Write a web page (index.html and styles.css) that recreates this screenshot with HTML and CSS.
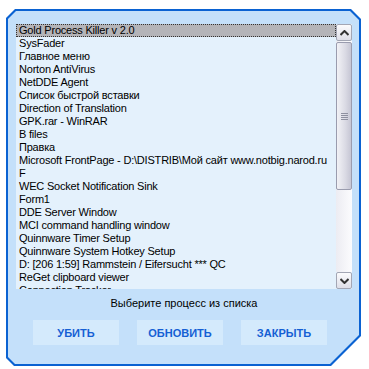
FILE: index.html
```html
<!DOCTYPE html>
<html lang="ru">
<head>
    <meta charset="UTF-8">
    <title>Gold Process Killer</title>
    <link rel="stylesheet" href="styles.css">
</head>
<body>
    <div class="window">
        <div class="panel">
            <div class="listbox">
                <div class="items">
                    <div class="item selected">Gold Process Killer v 2.0</div>
                    <div class="item">SysFader</div>
                    <div class="item">Главное меню</div>
                    <div class="item">Norton AntiVirus</div>
                    <div class="item">NetDDE Agent</div>
                    <div class="item">Список быстрой вставки</div>
                    <div class="item">Direction of Translation</div>
                    <div class="item">GPK.rar - WinRAR</div>
                    <div class="item">B files</div>
                    <div class="item">Правка</div>
                    <div class="item">Microsoft FrontPage - D:\DISTRIB\Мой сайт www.notbig.narod.ru</div>
                    <div class="item">F</div>
                    <div class="item">WEC Socket Notification Sink</div>
                    <div class="item">Form1</div>
                    <div class="item">DDE Server Window</div>
                    <div class="item">MCI command handling window</div>
                    <div class="item">Quinnware Timer Setup</div>
                    <div class="item">Quinnware System Hotkey Setup</div>
                    <div class="item">D: [206 1:59] Rammstein / Eifersucht *** QC</div>
                    <div class="item">ReGet clipboard viewer</div>
                    <div class="item">Connection Tracker</div>
                </div>
                <div class="scrollbar">
                    <div class="sb-btn">
                        <svg width="9" height="6" viewBox="0 0 9 6"><path d="M0.5 5 L4.5 1 L8.5 5" fill="none" stroke="#333" stroke-width="2"/></svg>
                    </div>
                    <div class="sb-track">
                        <div class="sb-thumb">
                            <div class="grip"></div>
                        </div>
                    </div>
                    <div class="sb-btn">
                        <svg width="9" height="6" viewBox="0 0 9 6"><path d="M0.5 1 L4.5 5 L8.5 1" fill="none" stroke="#333" stroke-width="2"/></svg>
                    </div>
                </div>
            </div>
            <div class="status">Выберите процесс из списка</div>
            <div class="buttons">
                <button class="btn">УБИТЬ</button>
                <button class="btn">ОБНОВИТЬ</button>
                <button class="btn">ЗАКРЫТЬ</button>
            </div>
        </div>
    </div>
</body>
</html>
```

FILE: styles.css
```css
* {
    box-sizing: border-box;
    margin: 0;
    padding: 0;
}

body {
    background: #fff;
    font-family: 'Liberation Sans', Arial, sans-serif;
    font-size: 11px;
    color: #000;
}

.window {
    margin: 9px 0 0 6px;
    width: 355px;
    height: 357px;
    padding: 2px;
    background: #0a62d2;
    clip-path: polygon(9px 0, calc(100% - 10px) 0, 100% 10px, 100% calc(100% - 30px), calc(100% - 30px) 100%, 8px 100%, 0 calc(100% - 8px), 0 9px);
}

.panel {
    height: 100%;
    background: #c4e0fa;
    padding: 13px 7px 0 8px;
    clip-path: polygon(8px 0, calc(100% - 9px) 0, 100% 9px, 100% calc(100% - 29px), calc(100% - 29px) 100%, 7px 100%, 0 calc(100% - 7px), 0 8px);
}

.listbox {
    display: flex;
    height: 265px;
    width: 336px;
    background: #e4f1fc;
}

.items {
    flex: 1;
    overflow: hidden;
}

.item {
    height: 13px;
    line-height: 13px;
    padding-left: 3px;
    white-space: nowrap;
    letter-spacing: -0.2px;
}

.item.selected {
    background: #b4b4b8;
    outline: 1px dotted #333;
    outline-offset: -1px;
}

.scrollbar {
    width: 16px;
    display: flex;
    flex-direction: column;
}

.sb-btn {
    height: 17px;
    border: 1px solid #a3a6b4;
    border-radius: 2px;
    background: linear-gradient(#fbfbfd, #dfdfe8);
    display: flex;
    align-items: center;
    justify-content: center;
}

.sb-track {
    flex: 1;
    padding: 1px 0 0;
    background: linear-gradient(to right, #ececf2, #fcfcfe);
}

.sb-thumb {
    height: 148px;
    border: 1px solid #9a9cae;
    border-radius: 2px;
    background: linear-gradient(to right, #f2f2f6, #dadae4 60%, #c6c6d4);
    display: flex;
    align-items: center;
    justify-content: center;
}

.grip {
    width: 7px;
    height: 7px;
    background: repeating-linear-gradient(#8e90a0 0 1px, transparent 1px 2px);
}

.status {
    text-align: center;
    margin-top: 8px;
    height: 13px;
    line-height: 13px;
}

.buttons {
    display: flex;
    gap: 18px;
    margin-top: 10px;
    padding-left: 17px;
}

.btn {
    width: 86px;
    height: 25px;
    border: none;
    background: #d4eafc;
    color: #1560d4;
    font-family: 'Liberation Sans', Arial, sans-serif;
    font-size: 11px;
    font-weight: bold;
}
```
